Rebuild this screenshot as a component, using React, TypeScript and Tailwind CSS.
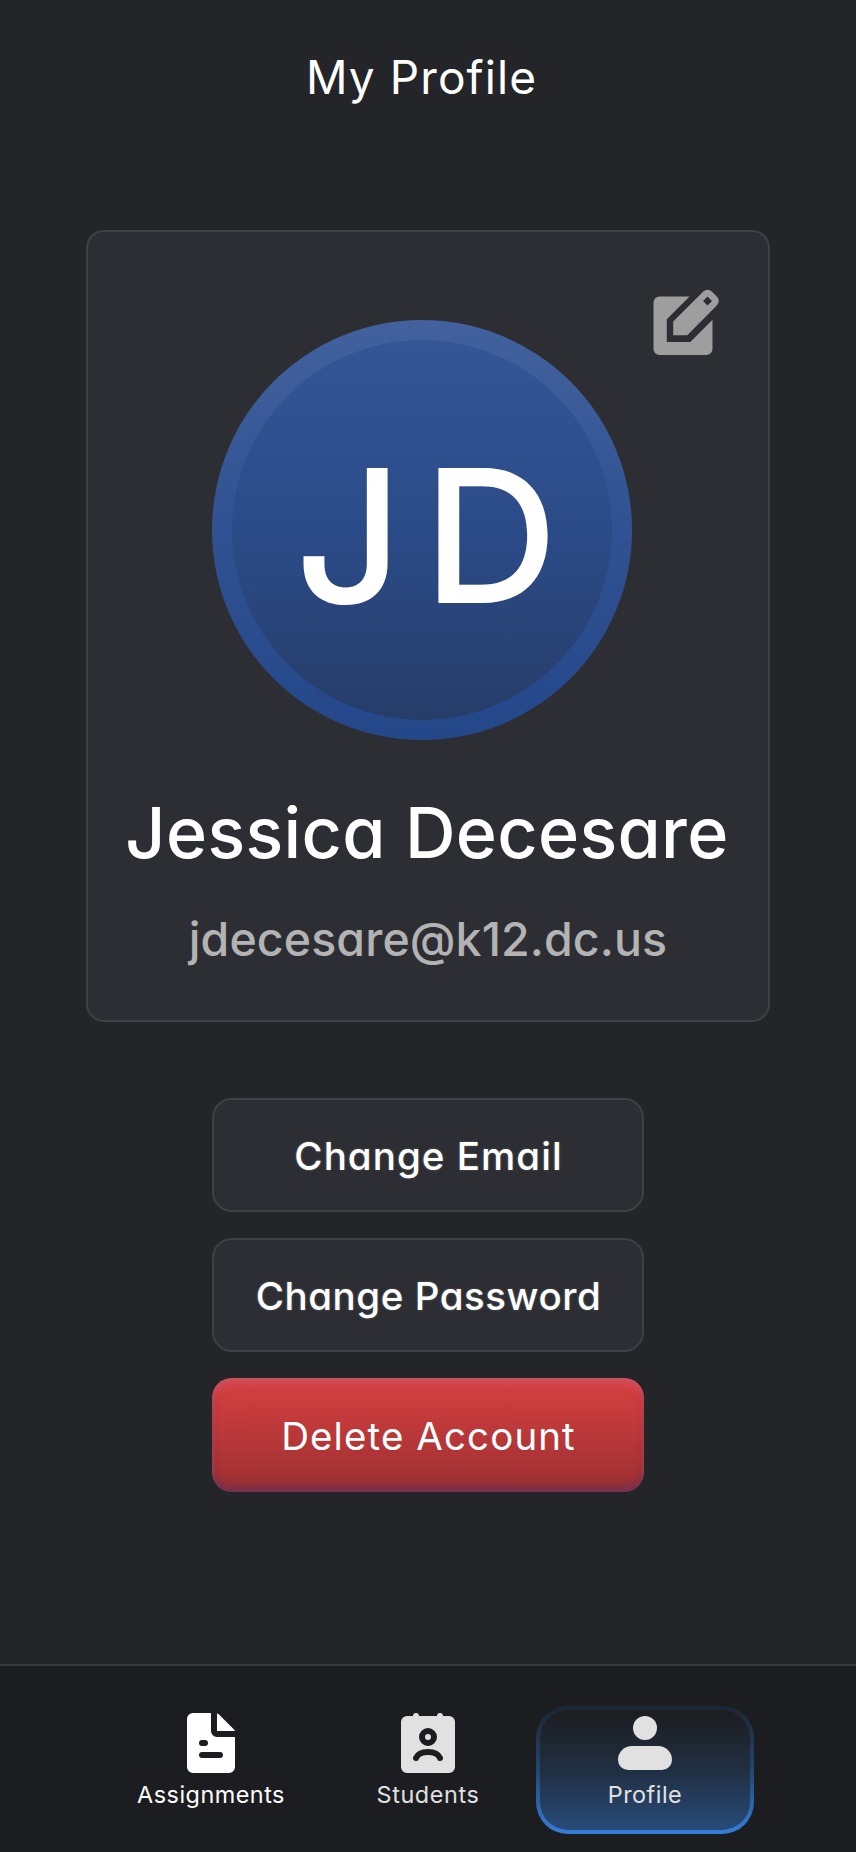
import React, { ReactNode } from "react";

const FONT = "[font-family:Inter,'Open_Sans',sans-serif] [font-feature-settings:'cv11']";

function EditIcon() {
  return (
    <svg viewBox="13 19 67 67" className="h-[67px] w-[67px]" fill="#9e9e9e" aria-hidden="true">
      <path d="M49.5 26.5H19.5a6 6 0 0 0-6 6V79a6 6 0 0 0 6 6H66.500a6 6 0 0 0 6-6V49.700L50.300 72H26.800V49.200Z" />
      <path
        fillRule="evenodd"
        d="M33.200 51.600 63.300 21.500a6 6 0 0 1 8.500 0L77 26.700a6 6 0 0 1 0 8.500L47.300 65.300H33.200ZM67.500 26.500 63 31l4.500 4.500L72 31Z"
      />
    </svg>
  );
}

function AssignmentsIcon() {
  return (
    <svg viewBox="0 0 48 60" className="h-[60px] w-[48px]" aria-hidden="true">
      <path d="M6 0H24V18a6 6 0 0 0 6 6H48V54a6 6 0 0 1-6 6H6a6 6 0 0 1-6-6V6a6 6 0 0 1 6-6Z" fill="#fff" />
      <path d="M30 0.500Q31 0.500 32 1.500L47 16.500Q48 17.500 48 18H30Z" fill="#fff" />
      <path d="M15 30H18M15 42H33" stroke="#1c1d20" strokeWidth="6" strokeLinecap="round" />
    </svg>
  );
}

function StudentsIcon() {
  return (
    <svg viewBox="0 0 54 60" className="h-[60px] w-[54px]" aria-hidden="true">
      <path
        d="M6 3H12a3 3 0 0 1 6 0H36a3 3 0 0 1 6 0H48a6 6 0 0 1 6 6V54a6 6 0 0 1-6 6H6a6 6 0 0 1-6-6V9a6 6 0 0 1 6-6Z"
        fill="#e1e1e1"
      />
      <circle cx="27" cy="24" r="6" fill="none" stroke="#1c1d20" strokeWidth="6" />
      <path d="M15 45C17 40.500 21 39 27 39S37 40.500 39 45" fill="none" stroke="#1c1d20" strokeWidth="6" strokeLinecap="round" />
    </svg>
  );
}

function ProfileIcon() {
  return (
    <svg viewBox="0 0 54 60" className="h-[60px] w-[54px]" fill="#e1e1e1" aria-hidden="true">
      <circle cx="27" cy="15" r="12" />
      <path d="M14 33H40A14 14 0 0 1 54 47A10 10 0 0 1 44 57H10A10 10 0 0 1 0 47A14 14 0 0 1 14 33Z" />
    </svg>
  );
}

function ActionButton({ children, className }: { children: ReactNode; className: string }) {
  return (
    <button type="button" className={`flex h-[114px] w-[432px] items-center justify-center rounded-[20px] pt-[2px] pl-[1px] text-[38.5px] leading-none whitespace-nowrap text-white ${className}`}>
      {children}
    </button>
  );
}

const OUTLINED = "border-2 border-[#3f4046] bg-[#2d2e33] font-medium [text-shadow:0_0_2px_#4c4d53,0_0_3px_#4c4d53]";

export default function App() {
  return (
    <div className={`flex h-[1852px] w-full flex-col bg-[#242529] text-white ${FONT}`}>
      <header className="flex h-[230px] justify-center pt-[49px] pr-[13px]">
        <h1 className="text-[46px] leading-[56px] tracking-[1.1px] whitespace-nowrap">My Profile</h1>
      </header>

      <main className="flex flex-1 flex-col items-center">
        <section className="relative flex h-[792px] w-[684px] flex-col items-center rounded-[18px] border-2 border-[#404146] bg-[#2d2e33] pt-[88px]">
          <button type="button" aria-label="Edit profile" className="absolute top-[57px] right-[48px]">
            <EditIcon />
          </button>
          <div className="mr-[12px] flex h-[420px] w-[420px] rounded-full bg-linear-to-b from-[#42619e] via-[#305292] to-[#24478a] p-[20px]">
            <div className="flex flex-1 items-center justify-center rounded-full bg-linear-to-b from-[#345697] via-[#2b4b88] to-[#263d69] pt-[11px] pl-[30px]">
              <span className="text-[186px] leading-none font-medium tracking-[21px]">JD</span>
            </div>
          </div>
          <h2 className="mt-[48px] mr-[2px] text-[70px] leading-[90px] font-medium tracking-[0.35px] whitespace-nowrap">Jessica Decesare</h2>
          <p className="mt-[29px] text-[46.5px] leading-[64px] font-medium tracking-[0.1px] whitespace-nowrap text-[#b3b3b3]">jdecesare@k12.dc.us</p>
        </section>

        <div className="mt-[76px] flex flex-col gap-[26px]">
          <ActionButton className={`${OUTLINED} tracking-[1.05px]`}>Change Email</ActionButton>
          <ActionButton className={`${OUTLINED} tracking-[0.55px]`}>Change Password</ActionButton>
          <ActionButton className="bg-linear-to-b from-[#d84041] to-[#9c2f31] tracking-[1.1px] shadow-[inset_0_7px_8px_-3px_rgba(200,110,140,0.5),inset_0_-9px_9px_-3px_rgba(80,50,100,0.55),inset_0_0_4px_rgba(160,80,110,0.4)]">
            Delete Account
          </ActionButton>
        </div>
      </main>

      <nav className="flex h-[188px] justify-center border-t-2 border-[#36373b] bg-[#1c1d20] pt-[40px] text-[23.4px] leading-[30px]">
        <a className="flex h-[128px] w-[218px] flex-col items-center pt-[7px]">
          <AssignmentsIcon />
          <span className="mt-[7px] tracking-[0.5px]">Assignments</span>
        </a>
        <a className="flex h-[128px] w-[216px] flex-col items-center pt-[7px] text-[#e1e1e1]">
          <StudentsIcon />
          <span className="mt-[7px] tracking-[0.6px]">Students</span>
        </a>
        <a className="flex h-[128px] w-[218px] rounded-[32px] bg-linear-to-b from-[#1c2633] via-[#234672] to-[#347fdb] p-[4px] text-[#e1e1e1]">
          <span className="flex flex-1 flex-col items-center rounded-[28px] bg-linear-to-b from-[#1c1d20] via-[#202f42] to-[#274b79] pt-[3px]">
            <ProfileIcon />
            <span className="mt-[7px] tracking-[0.5px]">Profile</span>
          </span>
        </a>
      </nav>
    </div>
  );
}
